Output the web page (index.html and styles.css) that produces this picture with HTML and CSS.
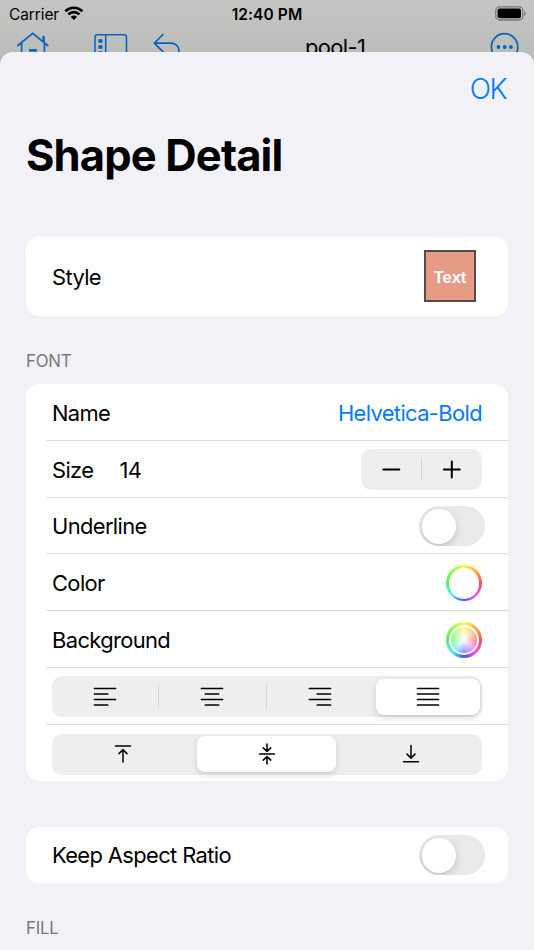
FILE: index.html
```html
<!DOCTYPE html>
<html lang="en">
<head>
<meta charset="utf-8">
<title>Shape Detail</title>
<link rel="stylesheet" href="styles.css">
</head>
<body>
<header class="backdrop">
  <div class="status">
    <div class="carrier"><span class="carrier-name">Carrier</span>
      <svg width="20" height="15" viewBox="0 0 20 15" fill="none" stroke="#000" stroke-width="2.6"><path d="M1.3 5.2a12.3 12.3 0 0 1 17.1 0M4.3 8.4a8 8 0 0 1 11.1 0"/><path d="M9.85 14 6.7 10.9a4.4 4.4 0 0 1 6.3 0Z" fill="#000" stroke="none"/></svg>
    </div>
    <div class="clock">12:40 PM</div>
    <svg class="battery" width="32" height="15" viewBox="0 0 32 15"><rect x=".8" y=".8" width="27" height="13.2" rx="3.8" fill="none" stroke="#777875" stroke-width="1.3"/><rect x="2.6" y="2.6" width="23.4" height="9.6" rx="2" fill="#000"/><path d="M29.2 5c2 .7 2 4 0 4.8Z" fill="#777875"/></svg>
  </div>
  <nav class="toolbar">
    <svg class="home" width="34" height="25" viewBox="0 0 34 25" fill="none" stroke="#0961bd" stroke-width="1.7"><path d="M1.2 14 16.7 1.4 32.3 14M5.6 11v14M28.4 11v14"/><path d="M27.6 4v6" stroke-width="2.4"/><path d="M13 18.4h7.8" stroke-width="2.7"/></svg>
    <svg class="panel" width="34" height="25" viewBox="0 0 34 25" fill="none" stroke="#0961bd" stroke-width="1.5"><rect x="1" y="2.8" width="31.5" height="26" rx="2.5"/><path d="M11.7 3v22"/><path d="M4.4 9h4M4.4 15h4M4.4 21h4" stroke-width="3.7"/></svg>
    <svg class="undo" width="28" height="25" viewBox="0 0 28 25" fill="none" stroke="#0961bd" stroke-width="1.7"><path d="M10.4 2 1.4 11.2l9 9M1.4 11.2h16.1c6 0 8.7 4 8.7 9V25"/></svg>
    <div class="document">pool-1</div>
    <svg class="more" width="30" height="25" viewBox="0 0 30 25" fill="none" stroke="#0961bd" stroke-width="1.7"><circle cx="14.6" cy="14.9" r="13.2"/><g fill="#0961bd" stroke="none"><circle cx="8.5" cy="15" r="1.9"/><circle cx="14.7" cy="15" r="1.9"/><circle cx="20.9" cy="15" r="1.9"/></g></svg>
  </nav>
</header>
<main class="sheet">
  <div class="actions"><span class="ok">OK</span></div>
  <h1 class="title"><span>Shape Detail</span></h1>
  <section class="card style-card">
    <span>Style</span>
    <div class="swatch">Text</div>
  </section>
  <h2 class="caption">FONT</h2>
  <section class="card font-card">
    <div class="row"><span>Name</span><span class="link">Helvetica-Bold</span></div>
    <div class="row"><span>Size</span><span class="size">14</span>
      <div class="stepper">
        <svg width="60" height="41" viewBox="0 0 60 41" stroke="#000" stroke-width="2" stroke-linecap="round"><path d="M22.3 20.5h16"/></svg>
        <i class="split"></i>
        <svg width="60" height="41" viewBox="0 0 60 41" stroke="#000" stroke-width="2" stroke-linecap="round"><path d="M21.8 20.5h16M29.8 12.5v16"/></svg>
      </div>
    </div>
    <div class="row"><span>Underline</span><div class="switch"><i class="thumb"></i></div></div>
    <div class="row"><span>Color</span><div class="wheel"></div></div>
    <div class="row"><span>Background</span><div class="wheel"><i class="wheel-fill"></i></div></div>
    <div class="row">
      <div class="segments four">
        <div class="segment"><svg width="24" height="20" viewBox="0 0 24 20"><path d="M1.5 1.5h21M1.5 7h13.2M1.5 12.5h21M1.5 18h13.2"/></svg></div>
        <div class="segment line"><svg width="24" height="20" viewBox="0 0 24 20"><path d="M1.5 1.5h21M5.4 7h13.2M1.5 12.5h21M5.4 18h13.2"/></svg></div>
        <div class="segment line"><svg width="24" height="20" viewBox="0 0 24 20"><path d="M1.5 1.5h21M9.3 7h13.2M1.5 12.5h21M9.3 18h13.2"/></svg></div>
        <div class="segment selected"><svg width="24" height="20" viewBox="0 0 24 20"><path d="M1.5 1.5h21M1.5 7h21M1.5 12.5h21M1.5 18h21"/></svg></div>
      </div>
    </div>
    <div class="row">
      <div class="segments three">
        <div class="segment thin"><svg width="18" height="22" viewBox="0 0 18 22"><path d="M1.5 3h15M9 7v12M5 10.6l4-4 4 4"/></svg></div>
        <div class="segment thin selected"><svg width="18" height="22" viewBox="0 0 18 22"><path d="M1.5 11h15M9 1v7.2M5.2 4.9 9 8.4l3.8-3.5M9 21v-7.2M5.2 17.1 9 13.6l3.8 3.5"/></svg></div>
        <div class="segment thin"><svg width="18" height="22" viewBox="0 0 18 22"><path d="M1.5 18.7h15M9 2.6v12M5 11.1l4 4 4-4"/></svg></div>
      </div>
    </div>
  </section>
  <section class="card ratio-card">
    <div class="row"><span class="ratio">Keep Aspect Ratio</span><div class="switch"><i class="thumb"></i></div></div>
  </section>
  <h2 class="caption fill-caption">FILL</h2>
</main>
</body>
</html>
```
FILE: styles.css
```css
* { box-sizing: border-box; }
body {
  margin: 0;
  height: 950px;
  overflow: hidden;
  font-family: Inter, "Liberation Sans", sans-serif;
  font-size: 21.9px;
  letter-spacing: -.62px;
  color: #000;
  background: linear-gradient(#c5c6c3, #b9bbb8 65px);
}
svg { display: block; flex: none; }
.backdrop { height: 52px; overflow: hidden; }
.status {
  display: grid;
  grid-template-columns: 1fr auto 1fr;
  align-items: center;
  height: 27px;
  padding: 0 7px 0 9px;
  font-size: 15.5px;
  letter-spacing: 0;
}
.carrier { display: flex; align-items: center; gap: 5px; padding-top: 1px; }
.carrier-name { letter-spacing: -.1px; }
.carrier svg { margin-top: -2px; }
.clock { font-weight: 600; letter-spacing: .1px; margin-left: -2px; padding-top: 1px; }
.battery { justify-self: end; }
.toolbar { display: flex; align-items: flex-start; height: 25px; padding: 5px 14px 0 16px; }
.panel { margin-left: 44px; }
.undo { margin-left: 24.5px; }
.document { margin-left: 124.5px; margin-top: 1px; line-height: 28px; letter-spacing: -.6px; }
.more { margin-left: auto; }
.sheet {
  height: 898px;
  padding: 0 26px;
  border-radius: 13px 13px 0 0;
  background: #f2f1f7;
}
.actions { display: flex; justify-content: flex-end; align-items: center; height: 73px; }
.ok { color: #007aff; font-size: 28px; font-weight: 300; letter-spacing: -1.6px; margin-right: 2px; }
.title { margin: 0; height: 112px; line-height: 61px; font-size: 43.5px; font-weight: 700; letter-spacing: -.86px; }
.card { border-radius: 13px; background: #fff; overflow: hidden; }
.style-card { display: flex; align-items: center; justify-content: space-between; height: 79px; padding: 0 32px 0 26px; }
.swatch {
  display: grid;
  place-items: center;
  width: 52px;
  height: 52px;
  margin-top: -1px;
  padding-top: 2px;
  border: 2px solid #584a44;
  background: #e59b86;
  color: #fff;
  font: bold 16.5px "Liberation Sans", sans-serif;
  letter-spacing: 0;
}
.caption { margin: 0; height: 68px; padding-top: 34px; line-height: 22px; font-size: 16.8px; font-weight: 400; letter-spacing: -.25px; color: #78777d; }
.font-card { height: 397px; }
.row {
  display: flex;
  align-items: center;
  justify-content: space-between;
  height: 56.8px;
  margin-left: 20px;
  padding: 2px 26px 0 6px;
  border-bottom: 1px solid #dedee0;
}
.row:last-child { padding-top: 2px; border-bottom: 0; }
.link { color: #007aff; }
.size { margin: 0 auto 0 26px; }
.stepper { display: flex; align-items: center; width: 121px; height: 41px; border-radius: 10px; background: #eee; }
.split { width: 1px; height: 23px; background: #d1d1d3; }
.switch { width: 66px; height: 40px; margin-right: -3px; padding: 2.6px; border-radius: 20px; background: #e9e9eb; overflow: hidden; }
.thumb { display: block; width: 34.8px; height: 34.8px; border-radius: 50%; background: #fff; box-shadow: 0 3px 9px rgba(0,0,0,.15), 0 1px 2px rgba(0,0,0,.06); }
.wheel {
  display: grid;
  place-items: center;
  width: 36px;
  height: 36px;
  border-radius: 50%;
  background: conic-gradient(#fff94f, #ffaa4a 45deg, #ff4c52 90deg, #fb50ed 135deg, #4d50fb 180deg, #50edff 225deg, #49f45e 270deg, #98f552 315deg, #fff94f);
}
.wheel::before { content: ""; grid-area: 1 / 1; width: 30.6px; height: 30.6px; border-radius: 50%; background: #fff; }
.wheel-fill {
  grid-area: 1 / 1;
  width: 26px;
  height: 26px;
  border-radius: 50%;
  background: radial-gradient(#fff, rgba(255,255,255,.3) 75%), conic-gradient(#fff94f, #ffaa4a 45deg, #ff4c52 90deg, #fb50ed 135deg, #4d50fb 180deg, #50edff 225deg, #49f45e 270deg, #98f552 315deg, #fff94f);
}
.segments { display: grid; width: 430px; height: 41px; flex: none; border-radius: 10px; background: #eee; }
.four { grid-template-columns: 106px 108px 108px 108px; }
.three { grid-template-columns: 142px 145px 143px; }
.segment { display: flex; align-items: center; justify-content: center; }
.segment svg { fill: none; stroke: #000; stroke-width: 1.7; stroke-linecap: round; stroke-linejoin: round; }
.segment.thin svg { stroke-width: 1.5; }
.line { background: linear-gradient(#d4d4d6, #d4d4d6) 0 50% / 1px 23px no-repeat; }
.selected { margin: 2.5px; border-radius: 8px; background: #fff; box-shadow: 0 3px 7px rgba(0,0,0,.12), 0 1px 2px rgba(0,0,0,.06); }
.four .selected { margin-left: 2px; margin-right: 2px; }
.three .selected { margin-left: 3px; margin-right: 3px; }
.ratio-card { margin-top: 45.5px; }
.ratio-card .row:last-child { height: 56.7px; padding-top: 1px; }
.fill-caption { padding-top: 33.5px; }
```
